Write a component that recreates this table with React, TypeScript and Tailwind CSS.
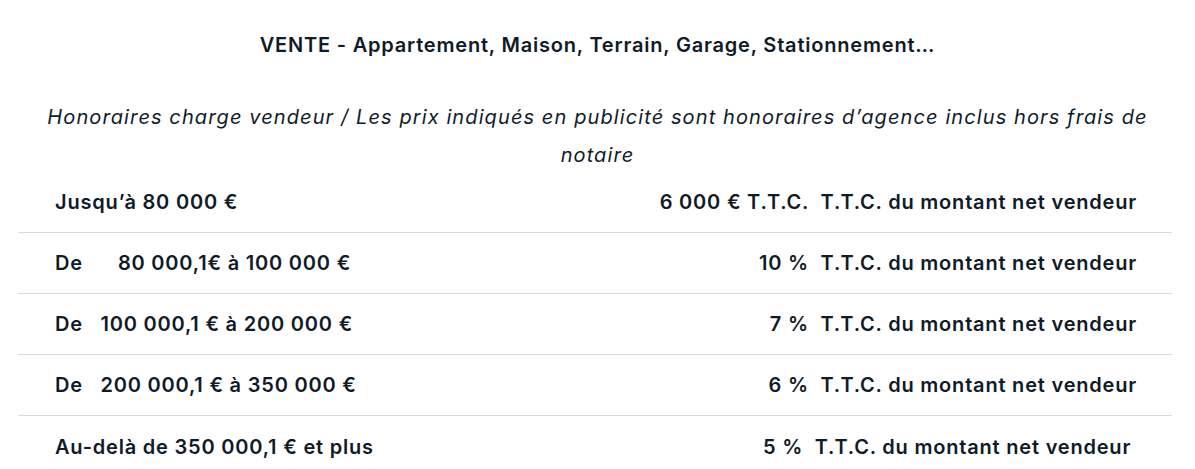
import React from 'react';

const rows = [
  { left: 'Jusqu’à 80 000 €', right: '6 000 € T.T.C.  T.T.C. du montant net vendeur' },
  { left: 'De      80 000,1€ à 100 000 €', right: '10 %  T.T.C. du montant net vendeur' },
  { left: 'De   100 000,1 € à 200 000 €', right: '7 %  T.T.C. du montant net vendeur' },
  { left: 'De   200 000,1 € à 350 000 €', right: '6 %  T.T.C. du montant net vendeur' },
  { left: 'Au-delà de 350 000,1 € et plus', right: '5 %  T.T.C. du montant net vendeur ' },
];

export default function App() {
  return (
    <div className="min-h-screen bg-white text-[#0f1b29] font-['Inter','Liberation_Sans',sans-serif] tracking-[0.05em]">
      {/* En-tête */}
      <h2 className="pt-[32px] text-center text-[20px] leading-[26px] font-semibold">
        VENTE - Appartement, Maison, Terrain, Garage, Stationnement…
      </h2>

      <p className="mt-[40px] mx-auto max-w-[1120px] text-center italic text-[20px] leading-[38px] tracking-[0.055em]">
        Honoraires charge vendeur / Les prix indiqués en publicité sont honoraires d’agence inclus hors frais de notaire
      </p>

      {/* Barème */}
      <div className="mt-[-2px] ml-[18px] mr-[23px]">
        {rows.map((row, i) => (
          <div
            key={i}
            className={`flex items-center justify-between h-[61px] pl-[37px] pr-[35px] text-[20px] font-semibold whitespace-pre ${
              i < rows.length - 1 ? 'border-b border-[#d9d9d9]' : ''
            }`}
          >
            <span>{row.left}</span>
            <span className="text-right">{row.right}</span>
          </div>
        ))}
      </div>
    </div>
  );
}
